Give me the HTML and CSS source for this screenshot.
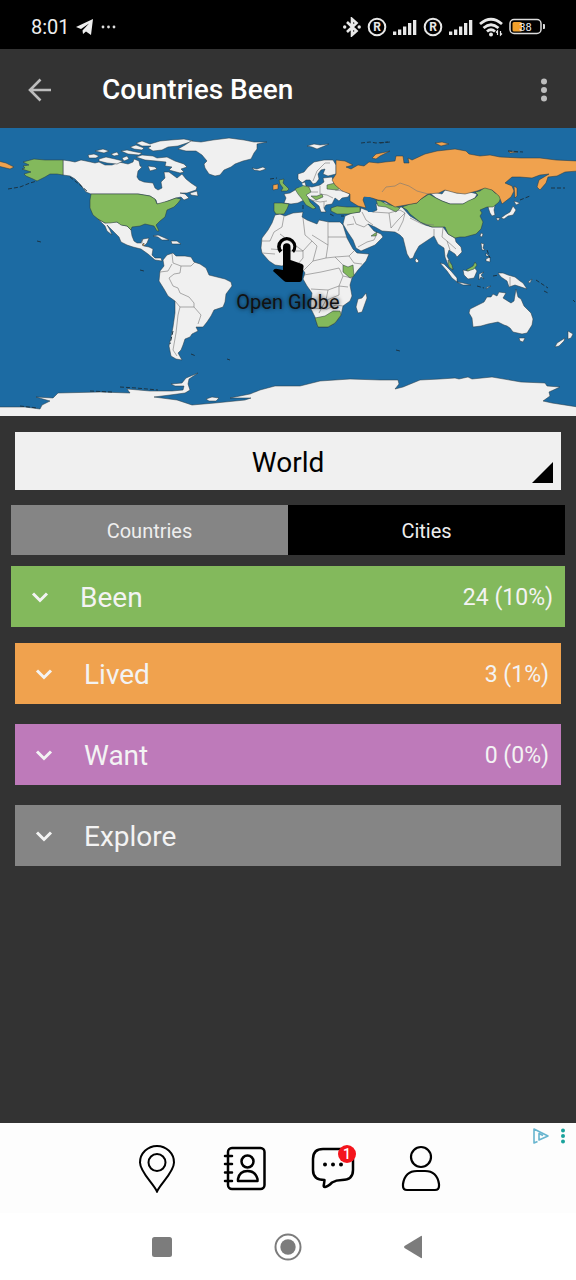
FILE: index.html
```html
<!DOCTYPE html>
<html lang="en">
<head>
    <meta charset="UTF-8">
    <meta name="viewport" content="width=device-width, initial-scale=1.0">
    <title>Countries Been</title>
    <link rel="stylesheet" href="styles.css">
</head>
<body>
    <div class="status-bar">
        <span class="time">8:01</span>
        <svg width="18" height="18" viewBox="0 0 18 18"><path fill="#eee" d="M0 9 17 1 15 17 10 13.500 7 16 6.500 12.500 13 5.500 5 11z"/></svg>
        <svg width="16" height="18" viewBox="0 0 16 18" fill="#ddd"><circle cx="3" cy="9" r="1.400"/><circle cx="8.500" cy="9" r="1.400"/><circle cx="14" cy="9" r="1.400"/></svg>
        <div class="status-icons">
            <svg width="18" height="20" viewBox="0 0 18 20" fill="none" stroke="#e8e8e8" stroke-width="2.600"><path d="M4 5 13.500 14 9 18V2l4.500 4L4 15"/><g fill="#e8e8e8" stroke="none"><circle cx="1.700" cy="10" r="1.700"/><circle cx="16.200" cy="10" r="1.700"/></g></svg>
            <svg class="reg" width="20" height="20" viewBox="0 0 20 20"><circle cx="10" cy="10" r="8.300"/><text x="10" y="14.200">R</text></svg>
            <svg width="24" height="18" viewBox="0 0 24 18" fill="#e8e8e8"><path d="M0 13.500h3.300V17H0zM5 11.500h3.300V17H5zM10 8.500h3.300V17H10zM15 5h3.300v12H15zM20 2h3.300v15H20z"/></svg>
            <svg class="reg" width="20" height="20" viewBox="0 0 20 20"><circle cx="10" cy="10" r="8.300"/><text x="10" y="14.200">R</text></svg>
            <svg width="24" height="18" viewBox="0 0 24 18" fill="#e8e8e8"><path d="M0 13.500h3.300V17H0zM5 11.500h3.300V17H5zM10 8.500h3.300V17H10zM15 5h3.300v12H15zM20 2h3.300v15H20z"/></svg>
            <svg width="24" height="20" viewBox="0 0 24 20" fill="none" stroke="#e8e8e8" stroke-width="2.800"><path d="M1 7Q12-2.500 23 7M4.500 11q7.500-6.500 15 0M8 14.500q4-3.500 8 0"/><circle cx="12" cy="17.500" r="2" fill="#e8e8e8" stroke="none"/><path stroke-width="1.200" d="M18.500 18v-4l-1.500 1.500M21.500 14v4l1.500-1.500"/></svg>
            <svg class="battery" width="36" height="18" viewBox="0 0 36 18"><rect x="1" y="1.500" width="31" height="14" rx="4" fill="none" stroke="#ddd" stroke-width="1.500"/><rect x="3.500" y="4" width="9.500" height="9.500" rx="1.500" fill="#f0a02c"/><path d="M34 6h1a1 1 0 0 1 1 1v3a1 1 0 0 1-1 1h-1z" fill="#ddd"/><text x="16.500" y="12.500">38</text></svg>
        </div>
    </div>

    <header class="app-bar">
        <button class="icon-btn" aria-label="Back">
            <svg width="24" height="24" viewBox="0 0 24 24" fill="none" stroke="#bdbdbd" stroke-width="2.600"><path d="M23 12H2M12.500 1.500 2 12 12.500 22.500"/></svg>
        </button>
        <h1>Countries Been</h1>
        <button class="icon-btn menu" aria-label="More options">
            <svg width="8" height="24" viewBox="0 0 8 24" fill="#bdbdbd"><circle cx="4" cy="3.500" r="3"/><circle cx="4" cy="12" r="3"/><circle cx="4" cy="20.500" r="3"/></svg>
        </button>
    </header>

    <div class="map">
        <svg class="world" viewBox="0 0 576 288">
            <!-- countries without a mark -->
            <g class="land">
                <path d="M63 32 70 33 75 34 81 32 86 33 95 35 99 34 105 37 112 37 119 34 128 36 133 34 134 31 139 33 140 38 142 39 138 43 137 49 139 52 144 54 153 55 155 60 158 62 162 60 161 54 165 50 164 44 169 44 173 47 177 50 182 46 186 51 191 55 197 59 196 62 187 65 180 65 185 66 189 70 184 72 181 69 176 70 168 73 161 76 157 76 156 72 150 68 138 66 91 66 86 64 80 56 75 51 70 48 63 47z"/>
                <path d="M88 27 94 26 99 28 96 30 89 30zM99 31 106 29 115 31 123 33 117 36 107 35 99 33zM95 23 103 21 109 23 104 25zM111 26 117 24 119 27 114 28zM122 30 127 28 129 31 124 33zM121 23 127 22 136 24 142 25 139 27 128 26zM136 15 142 13 150 16 160 13 171 12 184 11 193 13 187 15 178 18 168 19 162 22 153 23 148 20 151 18 142 18zM130 19 136 17 144 20 142 22 134 21zM136 29 142 27 153 28 157 30 167 29 175 33 184 36 187 39 181 41 184 44 180 45 169 42 172 39 165 38 166 34 156 33 145 32zM148 38 155 39 157 41 150 43zM190 65 197 63 198 68 191 67z"/>
                <path d="M178 21 185 17 191 13 201 14 213 12 229 10 244 12 254 14 267 14 257 16 257 21 254 25 251 31 243 33 235 36 231 39 224 42 220 47 215 48 209 46 205 40 204 36 207 33 202 27 196 23 186 23z"/>
                <path d="M252 40 257 41 263 39 266 41 260 43 254 42zM307 18 314 16 320 17 329 16 322 19 317 21 312 19z"/>
                <path d="M98 91 105 95 111 94 117 94 122 97 127 98 131 102 132 108 134 113 137 115 141 115 143 111 149 110 147 115 144 118 149 119 153 121 152 127 155 130 161 130 162 133 155 132 148 126 141 121 133 119 127 117 121 114 119 109 113 103 107 97 110 102 112 107 107 103 105 98z"/>
                <path d="M153 108 158 107 165 110 169 112 162 112 158 109zM171 113 177 113 181 116 172 116z"/>
                <path d="M163 132 167 127 173 125 176 128 185 128 191 129 194 134 200 136 206 140 209 147 217 149 225 151 231 154 232 158 226 166 225 174 223 179 214 182 211 188 207 194 203 199 196 199 198 203 192 206 190 209 185 211 183 217 181 222 178 225 182 232 176 231 171 228 169 218 171 209 173 199 175 185 175 173 168 168 164 161 159 153 160 143 164 138z"/>
                <path d="M298 51 298 46 304 44 308 39 314 34 324 32 333 32 336 37 336 46 328 48 323 46 325 41 321 42 318 46 319 51 316 55 313 56 310 52 306 52 302 55z"/>
                <path d="M284 66 290 65 295 62 300 59 302 55 305 54 306 58 312 59 320 57 324 54 323 50 332 49 335 57 342 62 350 66 348 69 342 70 339 73 335 70 332 76 326 77 324 80 326 84 321 84 319 78 313 73 308 70 304 72 298 75 291 76 284 75 286 70z"/>
                <path d="M275 87 280 86 285 88 293 85 303 84 302 89 307 92 317 96 319 92 329 94 340 94 343 97 347 110 353 121 357 125 369 126 366 133 358 142 352 150 350 157 352 168 350 173 343 178 341 187 335 195 328 199 318 199 315 189 311 181 311 173 312 165 307 158 303 151 305 145 303 142 298 137 289 135 282 138 275 137 269 133 262 125 261 120 262 110 268 102 272 95z"/>
                <path d="M358 171 362 170 366 165 367 170 362 184 358 185 356 179z"/>
                <path d="M343 96 345 88 352 85 360 84 361 80 366 82 373 84 377 82 376 76 385 74 396 80 402 79 410 88 425 97 432 99 443 99 448 106 455 110 456 114 461 119 462 124 457 129 455 126 449 122 447 128 450 134 453 141 449 139 445 129 444 120 438 116 434 108 428 112 419 118 415 125 413 130 410 131 407 126 403 110 400 107 395 104 382 103 375 99 368 96 374 103 381 106 383 109 375 117 361 123 356 120 353 112 347 103z"/>
                <path d="M430 65 434 64 442 66 445 62 450 62 457 65 470 64 477 66 475 70 468 74 463 76 450 76 442 73 436 70zM488 79 495 77 494 82 495 87 492 88 490 85zM416 130 419 133 417 135 415 133zM481 105 483 106 482 109 480 108zM514 73 520 75 516 77zM513 78 516 82 513 87 508 88 504 91 501 90 505 87 510 84zM496 90 500 90 498 93z"/>
                <path d="M481 115 484 116 483 120 485 122 482 122zM486 131 490 129 490 134 486 133zM486 125 489 128 486 128zM440 135 444 136 451 143 457 150 457 154 452 150 447 143zM457 154 463 155 471 157 463 157zM463 142 468 143 474 139 477 143 474 150 468 151 464 147zM479 146 484 144 481 147 484 151 481 149 479 152zM487 159 491 158 486 161zM498 145 503 145 508 147 515 149 520 153 523 155 527 161 521 159 515 157 509 159 507 153 501 149zM528 154 532 151 530 155z"/>
                <path d="M470 181 476 178 484 174 487 169 491 169 493 166 497 168 499 164 506 165 503 170 511 175 514 173 516 161 518 169 521 171 524 178 531 185 533 191 532 197 527 205 522 206 513 204 510 200 507 198 504 197 498 194 488 196 481 198 473 199 472 190 469 185zM519 210 525 210 523 214 520 213zM568 203 573 206 571 210 568 211zM565 210 564 213 559 218 555 219 557 215z"/>
                <path d="M-2 279 25 279 40 281 42 277 50 273 36 269 53 270 58 265 100 264 130 265 127 261 150 263 172 263 183 262 184 258 175 258 171 256 182 255 186 250 198 245 189 251 188 256 190 262 185 265 170 267 154 269 177 272 192 277 215 275 245 272 251 270 230 270 250 266 260 262 275 258 300 258 320 253 350 251 380 252 398 252 399 256 395 261 403 259 420 252 440 251 455 250 459 251 468 249 472 251 492 249 521 254 545 255 547 258 560 259 549 264 550 268 543 273 552 275 578 279V290H-2z"/>
                <path d="M206 271 212 269 219 270 216 273 209 273z"/>
            </g>

            <!-- been -->
            <g class="land been">
                <path d="M63 32V47L57 46 50 46 45 49 41 51 37 53 33 51 26 48 24 46 31 44 22 41 25 40 23 38 29 37 23 34 34 31 45 32 55 32z"/>
                <path d="M91 66 138 66 150 68 155 71 157 76 168 73 176 70 181 71 178 75 174 79 167 82 165 89 160 93 156 97 159 103 157 103 154 98 145 96 140 98 132 99 131 102 127 98 121 97 117 94 110 95 105 95 98 91 93 87 90 80 90 72z"/>
                <path d="M279 52 284 51 283 55 286 58 289 61 287 63 281 63 283 60 280 56zM274 75 282 75 289 76 287 81 284 86 276 86 274 83zM295 61 299 59 301 57 309 59 311 64 306 67 308 69 310 74 316 80 313 81 306 77 302 71 298 66zM311 68 317 68 322 66 323 69 316 72zM327 57 335 55 341 60 337 62 327 61zM331 80 337 78 347 79 360 79 360 84 348 86 337 86 331 83z"/>
                <path d="M376 72 381 73 386 76 395 78 400 80 396 84 386 79 378 78zM371 108 377 104 376 108zM343 137 348 139 353 137 354 148 350 150 343 144zM315 190 325 188 333 183 340 183 341 187 335 195 328 199 318 199z"/>
                <path d="M429 66 436 70 442 73 450 76 463 76 468 73 475 70 478 67 475 64 480 63 485 59 491 61 495 65 502 67 499 74 493 79 487 79 480 82 482 85 480 88 483 94 481 101 476 106 465 109 460 109 455 110 448 106 445 99 432 99 420 94 410 86 407 82 402 79 410 76 417 75 421 71z"/>
                <path d="M448 132 452 137 453 142 449 139zM466 142 473 138 475 134 477 137 474 141 468 143z"/>
            </g>

            <!-- lived -->
            <g class="land lived">
                <path d="M336 32 345 33 353 37 346 39 351 41 358 37 364 38 369 34 378 35 385 34 395 33 396 28 403 28 404 35 409 35 408 30 412 32 425 26 437 23 455 21 466 23 469 26 480 28 490 27 500 29 521 30 540 30 556 32 578 33V43L565 44 557 48 548 49 546 55 540 62 537 59 539 52 549 46 540 47 532 50 520 49 512 49 505 55 512 58 514 63 511 69 502 76 499 68 492 62 485 60 477 63 465 66 456 65 445 62 439 65 428 66 421 71 417 75 406 77 395 79 385 73 378 72 372 70 364 69 363 72 366 80 358 78 350 73 350 66 342 63 335 57 332 52 336 46z"/>
                <path d="M273 57 278 56 278 61 273 62zM372 30 376 26 386 24 390 23 380 28 376 31zM435 15 442 14 449 16 441 18zM508 23 518 24 510 25zM514 58 517 60 517 68 515 70zM-2 33 6 35 14 39 10 41-2 38zM142 117 144 115 144 118z"/>
            </g>

            <path class="sea" d="M364 69 370 69 373 72 370 77 373 84 368 84 366 78z"/>
            <path class="sea" d="M301 53 303 58 298 60z"/>

            <!-- borders -->
            <g class="borders">
                <path d="M382 64 386 59 395 58 400 55 409 58 417 63 428 66M335 62 343 63M320 58 320 66 327 67 333 70M311 64 318 64M311 72 320 74 327 73M324 74V80M313 53 317 43 325 35 330 35"/>
                <path d="M262 113H270L274 104 282 99 284 88M280 106 303 123 312 113 305 107 303 90M328 94V117M328 109H347M312 107 328 117 326 130 335 129 349 128M271 121 284 122 284 131M262 125 275 126M290 123 303 123 303 130 298 136M312 113 317 118 313 133 304 142M326 130 313 133M335 129 343 137M304 147 321 144 339 140 343 148 339 158 328 162 311 161M328 162 326 172 319 185M339 158 348 159M312 180 327 181 336 177 343 178M339 158 339 167 327 172M349 128 355 122M343 148 352 150M349 128 354 135 362 136"/>
                <path d="M353 88 356 96 364 99 368 96M347 97 354 96M362 84 366 92 373 97M373 84 389 85 391 100M389 85 400 82 405 85 398 92 391 100M405 85 403 93 398 103M410 90 422 96 434 97M434 101 434 108M443 100 442 109 447 113 450 122M447 113 456 121M358 119 367 114 374 112 377 106"/>
                <path d="M172 126 173 135 181 138 180 145 174 146 169 150 173 158 178 160 180 165 189 169 194 175 194 179 201 187 198 196M181 138 191 138 195 134M175 173 180 179 178 187 176 205 173 222 177 228M180 179 189 179 194 179M160 144 168 143 172 136M510 149V158M142 111V116"/>
            </g>

            <!-- small islands -->
            <g class="islands">
                <path d="M8 61 20 59 30 55 37 53M70 49 80 57 88 64M361 15 370 14 376 15 388 14M270 51 277 50M380 15 390 14M508 23 523 24M520 72 530 68M551 60 565 60M536 152 548 160M191 226 196 228M227 231 230 232M396 222 400 223M112 264 90 263M20 278 38 280M120 259 136 260 158 262M303 77 303 82M330 86 334 88M341 88 344 88M37 113 41 114M140 142 144 143M493 148 499 147M477 158 484 160M573 172 575 174M487 122 490 130M544 163 548 165M173 203 170 216"/>
            </g>
        </svg>

        <a class="open-globe" href="#globe">
            <svg width="34" height="46" viewBox="0 0 34 46"><path d="M8.500 17A9.600 9.600 0 1 1 23 17l-2.200-2.400a6.300 6.300 0 1 0-9.600 0z"/><path d="M12 11a3.700 3.700 0 0 1 7.500 0v13L31 28q2 1 1.500 3L31 44Q30.500 46 28.500 46H16q-2 0-3.500-1.500L2 35q1-3 4.500-2l5.500 1z"/></svg>
            <span>Open Globe</span>
        </a>
    </div>

    <main class="content">
        <div class="region">
            <select aria-label="Region">
                <option>World</option>
                <option>Africa</option>
                <option>Asia</option>
                <option>Europe</option>
            </select>
        </div>

        <div class="tabs">
            <button class="tab">Countries</button>
            <button class="tab active">Cities</button>
        </div>

        <div class="lists">
            <button class="row row-been">
                <svg class="chevron" width="18" height="12" viewBox="0 0 18 12"><path d="M2 1.500 9 8.500 16 1.500"/></svg>
                <span class="name">Been</span>
                <span class="count">24 (10%)</span>
            </button>
            <button class="row row-lived">
                <svg class="chevron" width="18" height="12" viewBox="0 0 18 12"><path d="M2 1.500 9 8.500 16 1.500"/></svg>
                <span class="name">Lived</span>
                <span class="count">3 (1%)</span>
            </button>
            <button class="row row-want">
                <svg class="chevron" width="18" height="12" viewBox="0 0 18 12"><path d="M2 1.500 9 8.500 16 1.500"/></svg>
                <span class="name">Want</span>
                <span class="count">0 (0%)</span>
            </button>
            <button class="row row-explore">
                <svg class="chevron" width="18" height="12" viewBox="0 0 18 12"><path d="M2 1.500 9 8.500 16 1.500"/></svg>
                <span class="name">Explore</span>
            </button>
        </div>
    </main>

    <div class="ad">
        <a href="#places" aria-label="Places">
            <svg width="44" height="48" viewBox="0 0 44 48" fill="none" stroke="#000" stroke-width="2"><path d="M22 46.500C18 38 5 27 5 17.500a17 16.500 0 0 1 34 0C39 27 26 38 22 46.500z"/><circle cx="22" cy="17.500" r="8.500"/></svg>
        </a>
        <a href="#contacts" aria-label="Contacts">
            <svg width="44" height="48" viewBox="0 0 44 48" fill="none" stroke="#000" stroke-width="2.500" stroke-linecap="round" stroke-linejoin="round"><rect x="5" y="3" width="36.500" height="41" rx="4"/><path d="M2 11h7M2 19h7M2 27.500h7M2 36h7M15 36v-2q1.500-8 9.500-8t10 8v2z"/><circle cx="24.500" cy="16.500" r="6"/></svg>
        </a>
        <a href="#messages" aria-label="Messages">
            <svg width="44" height="48" viewBox="0 0 44 48" fill="none" stroke="#000" stroke-width="2.500" stroke-linejoin="round"><path d="M12 4h20q10 0 10 10v11q0 10-11 10-6 0-10 2.500-4 4-7 4.500-2 0-1-3l.500-4Q2 35 2 25V14Q2 4 12 4z"/><g fill="#000" stroke="none"><circle cx="14" cy="19.500" r="2"/><circle cx="22" cy="19.500" r="2"/><circle cx="30" cy="19.500" r="2"/></g></svg>
            <span class="badge">1</span>
        </a>
        <a href="#profile" aria-label="Profile">
            <svg width="44" height="48" viewBox="0 0 44 48" fill="none" stroke="#000" stroke-width="2.200"><circle cx="22" cy="12" r="10"/><path d="M18 26h8q12 0 14 13v2q0 4-4 4H8q-4 0-4-4v-2q2-13 14-13z"/></svg>
        </a>
        <svg class="ad-choices" width="36" height="18" viewBox="0 0 36 18"><path d="M5.500 14.500 2 16V2l14 7-9 4V6.500l4 2" fill="none" stroke="#68b5cf" stroke-width="1.600" stroke-linejoin="round"/><g fill="#1aa39c"><circle cx="31" cy="3.500" r="2"/><circle cx="31" cy="9" r="2"/><circle cx="31" cy="14.500" r="2"/></g></svg>
    </div>

    <nav class="nav-bar">
        <button class="icon-btn" aria-label="Recent apps"><svg width="28" height="28" viewBox="0 0 28 28"><rect x="4" y="4" width="20" height="20" rx="2.500" fill="#7c7c7c"/></svg></button>
        <button class="icon-btn" aria-label="Home"><svg width="28" height="28" viewBox="0 0 28 28"><circle cx="14" cy="14" r="12.500" fill="none" stroke="#7c7c7c" stroke-width="2"/><circle cx="14" cy="14" r="7.700" fill="#7c7c7c"/></svg></button>
        <button class="icon-btn" aria-label="Back"><svg width="28" height="28" viewBox="0 0 28 28"><path d="M22 3.500v21q0 1-1 .500L4.500 15q-1-1 0-2L21 3q1-.500 1 .500z" fill="#7c7c7c"/></svg></button>
    </nav>
</body>
</html>
```

FILE: styles.css
```css
* {
    margin: 0;
    padding: 0;
    box-sizing: border-box;
}

body {
    min-height: 100vh;
    display: flex;
    flex-direction: column;
    background: #333;
    font-family: Roboto, "Liberation Sans", sans-serif;
}

button,
select {
    border: none;
    font-family: inherit;
    cursor: pointer;
}

svg {
    display: block;
    flex-shrink: 0;
}

.status-bar {
    height: 49px;
    padding: 4px 31px 0;
    display: flex;
    align-items: center;
    gap: 6px;
    background: #000;
    color: #eee;
}

.time {
    font-size: 20px;
}

.status-icons {
    margin-left: auto;
    display: flex;
    align-items: center;
    gap: 6px;
}

.reg circle {
    fill: none;
    stroke: #e8e8e8;
    stroke-width: 2;
}

.reg text {
    fill: #e8e8e8;
    font-size: 12px;
    font-weight: 700;
    text-anchor: middle;
}

.battery text {
    fill: #eee;
    font-size: 11px;
    text-anchor: middle;
}

.app-bar {
    height: 79px;
    padding: 2px 28px 0;
    display: flex;
    align-items: center;
    color: #fff;
}

.app-bar h1 {
    margin-left: 50px;
    font-size: 28px;
    font-weight: 500;
}

.icon-btn {
    background: none;
}

.menu {
    margin-left: auto;
}

.map {
    position: relative;
    background: #1c6ba3;
}

.world {
    width: 100%;
    height: auto;
}

.land {
    fill: #f0f0f0;
    stroke: #26363f;
    stroke-width: 0.5;
}

.been {
    fill: #83b95c;
}

.lived {
    fill: #f0a24e;
}

.sea {
    fill: #1c6ba3;
}

.borders {
    fill: none;
    stroke: #777;
    stroke-width: 0.6;
}

.islands {
    fill: none;
    stroke: #1b3444;
    stroke-width: 1;
    stroke-dasharray: 4 2;
}

/* sits on top of the map */
.open-globe {
    position: absolute;
    inset: 0;
    padding-top: 6px;
    display: flex;
    flex-direction: column;
    align-items: center;
    justify-content: center;
    gap: 8px;
    color: #111;
    font-size: 20px;
    line-height: 24px;
    text-decoration: none;
    text-shadow: 0 0 4px rgba(0, 0, 0, 0.7);
}

.content {
    flex: 1;
    padding: 16px 11px;
}

.region {
    position: relative;
    margin: 0 4px 15px;
}

.region select {
    display: block;
    width: 100%;
    height: 58px;
    padding-top: 2px;
    appearance: none;
    background: #f0f0f0;
    color: #000;
    font-size: 28px;
    text-align: center;
    text-align-last: center;
}

.region::after {
    content: "";
    position: absolute;
    right: 8px;
    bottom: 7px;
    width: 21px;
    height: 21px;
    background: #000;
    clip-path: polygon(100% 0, 100% 100%, 0 100%);
    pointer-events: none;
}

.tabs {
    display: flex;
    margin-bottom: 11px;
}

.tab {
    flex: 1;
    height: 50px;
    padding-top: 2px;
    background: #858585;
    color: #eee;
    font-size: 20px;
}

.tab.active {
    background: #000;
}

.lists {
    display: flex;
    flex-direction: column;
    gap: 20px;
}

.row {
    height: 61px;
    margin: 0 4px;
    padding: 2px 12px 0 20px;
    display: flex;
    align-items: center;
    color: #f3f3f3;
    text-align: left;
}

.row-been {
    margin: 0 0 -4px;
    background: #83b95c;
}

.row-lived {
    background: #f0a24e;
}

.row-want {
    background: #be7aba;
}

.row-explore {
    background: #858585;
}

.chevron {
    fill: none;
    stroke: #f3f3f3;
    stroke-width: 3;
}

.name {
    flex: 1;
    margin-left: 31px;
    font-size: 28px;
}

.count {
    font-size: 23px;
}

.ad {
    position: relative;
    height: 90px;
    padding: 2px 0 0 2px;
    display: flex;
    align-items: center;
    justify-content: center;
    gap: 44px;
    background: #fdfdfd;
}

.ad a {
    position: relative;
}

.badge {
    position: absolute;
    top: 0;
    right: -1px;
    width: 18px;
    height: 18px;
    border-radius: 50%;
    background: #f4141c;
    color: #fff;
    font-size: 14px;
    font-weight: 500;
    line-height: 18px;
    text-align: center;
}

.ad-choices {
    position: absolute;
    top: 4px;
    right: 8px;
}

.nav-bar {
    height: 67px;
    display: flex;
    align-items: center;
    justify-content: center;
    gap: 98px;
    background: #fff;
}
```
